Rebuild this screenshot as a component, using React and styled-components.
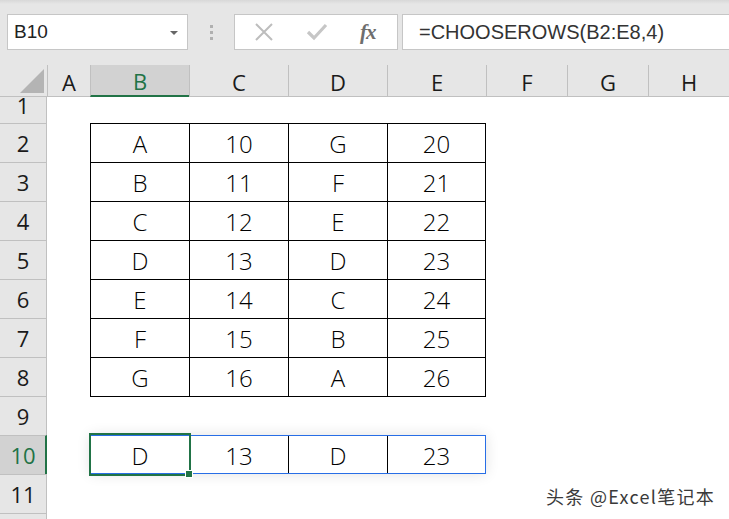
import React from "react";
import styled, { createGlobalStyle } from "styled-components";

const GlobalStyle = createGlobalStyle`
  html, body { margin: 0; padding: 0; background: #fff; }
  body { width: 729px; height: 519px; overflow: hidden; }
  * { box-sizing: border-box; }
`;

const GREEN = "#217346";
const BLUE = "rgb(40, 110, 230)";
const HEADER_BG = "#e6e6e6";
const HEADER_SEL = "#d2d2d2";
const HEADER_LINE = "#c0c0c0";

const Page = styled.div`
  position: relative;
  width: 729px;
  height: 519px;
  overflow: hidden;
  background: #fff;
  font-family: "Open Sans", "Noto Sans", sans-serif;
`;

const Toolbar = styled.div`
  display: flex;
  align-items: flex-start;
  height: 65px;
  padding: 14px 0 0 7px;
  background: linear-gradient(#d8d8d8 0px, ${HEADER_BG} 4px);
`;

const Box = styled.div`
  height: 36px;
  background: #fff;
  border: 1px solid #c6c6c6;
  display: flex;
  align-items: center;
`;

const NameBox = styled(Box)`
  width: 181px;
  padding: 0 9px 0 6px;
  justify-content: space-between;
  font-family: "Liberation Sans", Arial, sans-serif;
  font-size: 19px;
  color: #222;
`;

const DropArrow = styled.span`
  width: 0;
  height: 0;
  border-left: 4px solid transparent;
  border-right: 4px solid transparent;
  border-top: 4px solid #666;
  margin-top: 2px;
`;

const Dots = styled.div`
  width: 46px;
  height: 36px;
  display: flex;
  flex-direction: column;
  align-items: center;
  justify-content: center;
  gap: 3px;
  padding-top: 1px;
`;

const Dot = styled.span`
  width: 3px;
  height: 3px;
  background: #b0b0b0;
`;

const FxBox = styled(Box)`
  width: 164px;
  padding: 0 0 0 19px;
`;

const IconSlot = styled.span`
  width: ${(p) => p.$w}px;
  display: flex;
  align-items: center;
`;

const FxText = styled.span`
  font-family: "Liberation Serif", "DejaVu Serif", serif;
  font-style: italic;
  font-weight: bold;
  font-size: 21px;
  color: #6e6e6e;
  letter-spacing: -1px;
`;

const FormulaBox = styled(Box)`
  flex: 1;
  margin-left: 4px;
  margin-right: -4px;
  padding-left: 16px;
  font-family: "Liberation Sans", Arial, sans-serif;
  font-size: 20px;
  color: #333;
`;

const Sheet = styled.div`
  display: grid;
  grid-template-columns: 47px 43px 99px 99px 99px 99px 81px 81px 81px;
  grid-template-rows: 32px 26px repeat(11, 39px);
`;

const Corner = styled.div`
  grid-row: 1;
  grid-column: 1;
  background: ${HEADER_BG};
  border-bottom: 1px solid ${HEADER_LINE};
  display: flex;
  justify-content: flex-end;
  align-items: flex-end;
  padding: 0 3px 3px 0;
`;

const ColHeader = styled.div`
  grid-row: 1;
  grid-column: ${(p) => p.$col};
  background: ${(p) => (p.$active ? HEADER_SEL : HEADER_BG)};
  border-left: 1px solid ${HEADER_LINE};
  border-bottom: ${(p) => (p.$active ? `2px solid ${GREEN}` : `1px solid ${HEADER_LINE}`)};
  color: ${(p) => (p.$active ? GREEN : "#1a1a1a")};
  font-size: 22px;
  display: flex;
  align-items: center;
  justify-content: center;
  padding-top: 2px;
`;

const RowHeader = styled.div`
  grid-row: ${(p) => p.$row};
  grid-column: 1;
  background: ${(p) => (p.$active ? HEADER_SEL : HEADER_BG)};
  border-top: ${(p) => (p.$first ? "none" : `1px solid ${HEADER_LINE}`)};
  border-right: ${(p) => (p.$active ? `2px solid ${GREEN}` : `1px solid ${HEADER_LINE}`)};
  color: ${(p) => (p.$active ? GREEN : "#1a1a1a")};
  font-size: 22px;
  display: flex;
  align-items: ${(p) => (p.$first ? "flex-end" : "center")};
  justify-content: center;
  overflow: hidden;
  line-height: 1;
  padding-bottom: ${(p) => (p.$first ? "7px" : "0")};
  padding-left: ${(p) => (p.$active ? "1px" : "0")};
`;

const DataTable = styled.div`
  grid-row: 3 / span 7;
  grid-column: 3 / span 4;
  display: grid;
  grid-template-columns: 99px 99px 99px 98px;
  grid-template-rows: repeat(7, 39px);
  border-left: 1px solid #000;
  border-top: 1px solid #000;
  align-self: start;
`;

const Cell = styled.div`
  border-right: 1px solid #000;
  border-bottom: 1px solid #000;
  display: flex;
  align-items: center;
  justify-content: center;
  font-weight: 300;
  font-size: 24px;
  color: #000;
  padding-top: 1px;
`;

const SpillRange = styled.div`
  grid-row: 11;
  grid-column: 3 / span 4;
  position: relative;
  display: flex;
  padding: 1px;
  background: #fff;
  box-shadow: inset 0 0 0 1px ${BLUE}, 0 0 14px rgba(0, 0, 0, 0.12);
`;

const SpillCell = styled.div`
  width: ${(p) => p.$w}px;
  border-left: ${(p) => (p.$first ? "none" : "1px solid #000")};
  display: flex;
  align-items: center;
  justify-content: center;
  font-weight: 300;
  font-size: 24px;
  color: #000;
  padding-top: 1px;
`;

const Selection = styled.div`
  position: absolute;
  left: -1px;
  top: -2px;
  width: 102px;
  height: 43px;
  border: 2px solid ${GREEN};
  pointer-events: none;
`;

const FillHandle = styled.div`
  position: absolute;
  left: 95px;
  top: 35px;
  width: 8px;
  height: 8px;
  background: ${GREEN};
  border: 1px solid #fff;
`;

const Watermark = styled.div`
  position: absolute;
  left: 546px;
  top: 483px;
  font-family: "Noto Sans CJK SC", "Noto Sans", sans-serif;
  font-size: 18px;
  letter-spacing: 1.3px;
  color: #3a3a3a;
  text-shadow: 0 0 2px #fff, 0 0 2px #fff;
  white-space: nowrap;
`;

const table = [
  ["A", "10", "G", "20"],
  ["B", "11", "F", "21"],
  ["C", "12", "E", "22"],
  ["D", "13", "D", "23"],
  ["E", "14", "C", "24"],
  ["F", "15", "B", "25"],
  ["G", "16", "A", "26"],
];

const cols = ["A", "B", "C", "D", "E", "F", "G", "H"];

export default function App() {
  return (
    <Page>
      <GlobalStyle />
      <Toolbar>
        <NameBox>
          <span>B10</span>
          <DropArrow />
        </NameBox>
        <Dots>
          <Dot />
          <Dot />
          <Dot />
        </Dots>
        <FxBox>
          <IconSlot $w={52}>
            <svg width="20" height="20" viewBox="0 0 20 20">
              <path d="M2 2 L18 18 M18 2 L2 18" stroke="#bdbdbd" strokeWidth="2" fill="none" />
            </svg>
          </IconSlot>
          <IconSlot $w={54}>
            <svg width="22" height="20" viewBox="0 0 22 20">
              <path d="M2 10 L8 16 L20 3" stroke="#c6c6c6" strokeWidth="3.2" fill="none" />
            </svg>
          </IconSlot>
          <IconSlot $w={30}>
            <FxText>fx</FxText>
          </IconSlot>
        </FxBox>
        <FormulaBox>=CHOOSEROWS(B2:E8,4)</FormulaBox>
      </Toolbar>
      <Sheet>
        <Corner>
          <svg width="24" height="24" viewBox="0 0 24 24">
            <path d="M24 0 L24 24 L0 24 Z" fill="#b4b4b4" />
          </svg>
        </Corner>
        {cols.map((c, i) => (
          <ColHeader key={c} $col={i + 2} $active={c === "B"}>
            {c}
          </ColHeader>
        ))}
        {Array.from({ length: 12 }, (_, i) => (
          <RowHeader key={i} $row={i + 2} $first={i === 0} $active={i + 1 === 10}>
            {i < 11 ? i + 1 : ""}
          </RowHeader>
        ))}
        <DataTable>
          {table.flat().map((v, i) => (
            <Cell key={i}>{v}</Cell>
          ))}
        </DataTable>
        <SpillRange>
          <SpillCell $w={98} $first>D</SpillCell>
          <SpillCell $w={99}>13</SpillCell>
          <SpillCell $w={99}>D</SpillCell>
          <SpillCell $w={98}>23</SpillCell>
          <Selection />
          <FillHandle />
        </SpillRange>
      </Sheet>
      <Watermark>头条 @Excel笔记本</Watermark>
    </Page>
  );
}
